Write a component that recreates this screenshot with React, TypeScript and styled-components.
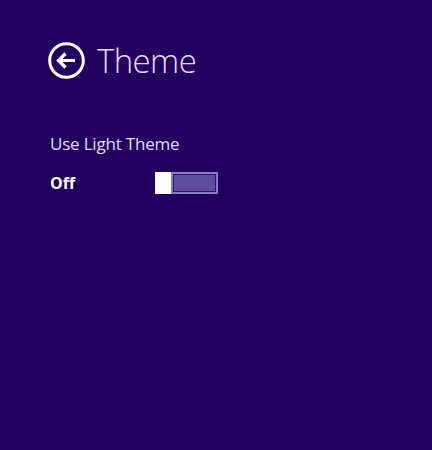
import React, { useState } from "react";
import styled, { createGlobalStyle } from "styled-components";

const GlobalStyle = createGlobalStyle`
  html, body {
    margin: 0;
    padding: 0;
    background: #220060;
  }
`;

const Page = styled.div`
  width: 432px;
  height: 450px;
  box-sizing: border-box;
  padding: 42px 0 0 48px;
  background: #220060;
  font-family: "Open Sans", "Liberation Sans", sans-serif;
  color: #e4dcf5;
`;

const Header = styled.div`
  display: flex;
  align-items: center;
  gap: 12px;
  height: 37px;
`;

const BackButton = styled.button`
  width: 37px;
  height: 37px;
  padding: 0;
  border: none;
  background: transparent;
  cursor: pointer;
  display: flex;
`;

const Title = styled.h1`
  margin: 0;
  font-size: 33px;
  font-weight: 300;
  letter-spacing: -0.6px;
  line-height: 37px;
  color: #e4dcf5;
`;

const Section = styled.div`
  margin-top: 54px;
  padding-left: 2px;
`;

const Label = styled.div`
  font-size: 17px;
  line-height: 22px;
  letter-spacing: -0.2px;
  color: #e4dcf5;
`;

const ToggleRow = styled.div`
  display: flex;
  align-items: center;
  margin-top: 17px;
`;

const State = styled.span`
  width: 105px;
  font-size: 16px;
  font-weight: 700;
  color: #ffffff;
`;

const Toggle = styled.button`
  display: flex;
  width: 63px;
  height: 22px;
  padding: 0;
  border: none;
  background: transparent;
  cursor: pointer;
`;

const Thumb = styled.span`
  width: 16px;
  height: 22px;
  background: #ffffff;
`;

const Rail = styled.span<{ $on: boolean }>`
  flex: 1;
  box-sizing: border-box;
  border: 2px solid #8a7cc4;
  box-shadow: inset 0 0 0 1px #2d0f6c;
  background: ${(p) => (p.$on ? "#8a7cc4" : "#5e4ea0")};
`;

const BackIcon = () => (
  <svg width="37" height="37" viewBox="0 0 37 37" fill="none">
    <circle cx="18.5" cy="18.5" r="16.8" stroke="#ffffff" strokeWidth="3" />
    <path
      d="M10.5 18.5 H27 M17.5 11.5 L10.5 18.5 L17.5 25.5"
      stroke="#ffffff"
      strokeWidth="3.2"
      strokeLinejoin="miter"
    />
  </svg>
);

const App = () => {
  const [on, setOn] = useState(false);

  return (
    <Page>
      <GlobalStyle />
      <Header>
        <BackButton aria-label="Back">
          <BackIcon />
        </BackButton>
        <Title>Theme</Title>
      </Header>
      <Section>
        <Label>Use Light Theme</Label>
        <ToggleRow>
          <State>{on ? "On" : "Off"}</State>
          <Toggle onClick={() => setOn(!on)} aria-label="Use Light Theme">
            <Thumb />
            <Rail $on={on} />
          </Toggle>
        </ToggleRow>
      </Section>
    </Page>
  );
};

export default App;
